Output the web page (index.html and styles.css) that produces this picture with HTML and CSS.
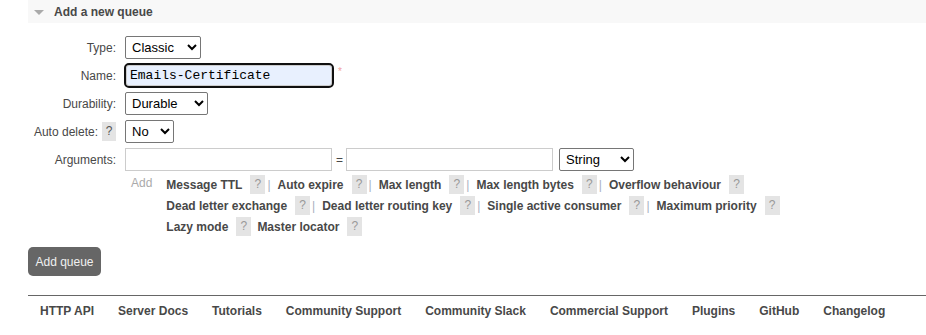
FILE: index.html
```html
<!DOCTYPE html>
<html lang="en">
<head>
    <meta charset="UTF-8">
    <title>Add a new queue</title>
    <link rel="stylesheet" href="styles.css">
</head>
<body>
    <div class="section">
        <div class="section-head">
            <span class="toggle"></span>
            <h2>Add a new queue</h2>
        </div>

        <div class="form">
            <label class="form-label">Type:</label>
            <div class="form-field">
                <select class="type-select">
                    <option>Classic</option>
                    <option>Quorum</option>
                </select>
            </div>

            <label class="form-label">Name:</label>
            <div class="form-field">
                <input type="text" class="name-input focused" value="Emails-Certificate">
                <span class="mand">*</span>
            </div>

            <label class="form-label">Durability:</label>
            <div class="form-field">
                <select class="durable-select">
                    <option>Durable</option>
                    <option>Transient</option>
                </select>
            </div>

            <label class="form-label">Auto delete: <span class="help help-dark">?</span></label>
            <div class="form-field">
                <select class="ad-select">
                    <option>No</option>
                    <option>Yes</option>
                </select>
            </div>

            <label class="form-label">Arguments:</label>
            <div class="form-field">
                <input type="text" class="arg-input">
                <span class="eq">=</span>
                <input type="text" class="arg-input">
                <select class="str-select">
                    <option>String</option>
                    <option>Number</option>
                    <option>Boolean</option>
                    <option>List</option>
                </select>
            </div>

            <div></div>
            <div class="arg-hints">
                <span class="add-link">Add</span>
                <div class="arg-links">
                    <div class="arg-line">
                        <span class="arg-link">Message TTL</span><span class="help">?</span><span class="sep">|</span>
                        <span class="arg-link">Auto expire</span><span class="help">?</span><span class="sep">|</span>
                        <span class="arg-link">Max length</span><span class="help">?</span><span class="sep">|</span>
                        <span class="arg-link">Max length bytes</span><span class="help">?</span><span class="sep">|</span>
                        <span class="arg-link">Overflow behaviour</span><span class="help">?</span>
                    </div>
                    <div class="arg-line">
                        <span class="arg-link">Dead letter exchange</span><span class="help">?</span><span class="sep">|</span>
                        <span class="arg-link">Dead letter routing key</span><span class="help">?</span><span class="sep">|</span>
                        <span class="arg-link">Single active consumer</span><span class="help">?</span><span class="sep">|</span>
                        <span class="arg-link">Maximum priority</span><span class="help">?</span>
                    </div>
                    <div class="arg-line">
                        <span class="arg-link">Lazy mode</span><span class="help">?</span>
                        <span class="arg-link gap">Master locator</span><span class="help">?</span>
                    </div>
                </div>
            </div>
        </div>

        <button class="btn">Add queue</button>
    </div>

    <div class="footer">
        <a href="#">HTTP API</a>
        <a href="#">Server Docs</a>
        <a href="#">Tutorials</a>
        <a href="#">Community Support</a>
        <a href="#">Community Slack</a>
        <a href="#">Commercial Support</a>
        <a href="#">Plugins</a>
        <a href="#">GitHub</a>
        <a href="#">Changelog</a>
    </div>
</body>
</html>
```

FILE: styles.css
```css
body {
    margin: 0;
    font-family: "Liberation Sans", Arial, sans-serif;
    font-size: 12px;
    color: #484848;
    background: #fff;
}
.section {
    margin-left: 28px;
}
.section-head {
    display: flex;
    align-items: center;
    height: 23px;
    background: #f8f8f8;
    padding-left: 6px;
}
.toggle {
    width: 0;
    height: 0;
    border-left: 5px solid transparent;
    border-right: 5px solid transparent;
    border-top: 5px solid #aaa;
    margin-right: 10px;
    margin-top: 1px;
}
.section-head h2 {
    margin: 0;
    font-size: 12px;
    font-weight: bold;
    color: #484848;
}
.form {
    display: grid;
    grid-template-columns: 88px auto;
    column-gap: 9px;
    row-gap: 5px;
    margin-top: 13px;
    align-items: center;
}
.form-label {
    text-align: right;
    color: #484848;
    white-space: nowrap;
    margin-left: -28px;
    display: flex;
    justify-content: flex-end;
    align-items: center;
}
.form-field {
    display: flex;
    align-items: center;
    height: 23px;
}
select {
    font-family: "Liberation Sans", Arial, sans-serif;
    font-size: 13px;
    color: #000;
    height: 23px;
    border: 1px solid #767676;
    border-radius: 2px;
    background: #fff;
    padding: 0 2px;
}
.type-select { width: 76px; }
.durable-select { width: 83px; }
.ad-select { width: 49px; }
.str-select { width: 75px; margin-left: 6px; }
input[type=text] {
    font-family: "Liberation Mono", monospace;
    font-size: 13px;
    height: 23px;
    box-sizing: border-box;
    border: 1px solid #ccc;
    padding: 1px 3px;
    margin: 0;
}
.name-input {
    width: 206px;
    margin-left: 1px !important;
    height: 21px !important;
}
.focused {
    background: #e8f0fe;
    outline: 2px solid #101010;
    border-radius: 3px;
    border-color: #101010;
}
.mand {
    color: #f0a0a0;
    font-size: 10px;
    margin-left: 6px;
    align-self: flex-start;
    margin-top: 2px;
}
.arg-input {
    width: 207px;
}
.eq {
    margin: 0 3px 0 4px;
    color: #484848;
}
.help {
    display: inline-block;
    width: 15px;
    height: 19px;
    line-height: 19px;
    text-align: center;
    background: #e4e4e4;
    color: #999;
    font-weight: normal;
    vertical-align: middle;
}
.help-dark {
    color: #555;
    margin-left: 4px;
    width: 14px;
}
.arg-hints {
    display: flex;
    align-items: flex-start;
    padding-left: 6px;
    margin-top: -2px;
}
.add-link {
    color: #aaa;
    font-size: 12px;
    line-height: 18px;
    margin-right: 14px;
}
.arg-line {
    height: 21px;
    display: flex;
    align-items: center;
    white-space: nowrap;
}
.arg-link {
    font-weight: bold;
    color: #484848;
    margin-right: 8px;
}
.arg-link.gap {
    margin-left: 6px;
}
.sep {
    color: #a8b0c0;
    margin: 0 7px 0 2px;
}
.btn {
    display: block;
    margin-top: 10px;
    width: 73px;
    height: 29px;
    background: #666;
    color: #f0f0f0;
    border: none;
    border-radius: 5px;
    font-family: "Liberation Sans", Arial, sans-serif;
    font-size: 12px;
    padding: 0;
}
.footer {
    margin: 19px 0 0 28px;
    border-top: 1px solid #666;
    padding: 8px 0 0 0;
    display: flex;
}
.footer a {
    font-weight: bold;
    color: #484848;
    text-decoration: none;
    margin: 0 12px;
    line-height: 15px;
}
```
